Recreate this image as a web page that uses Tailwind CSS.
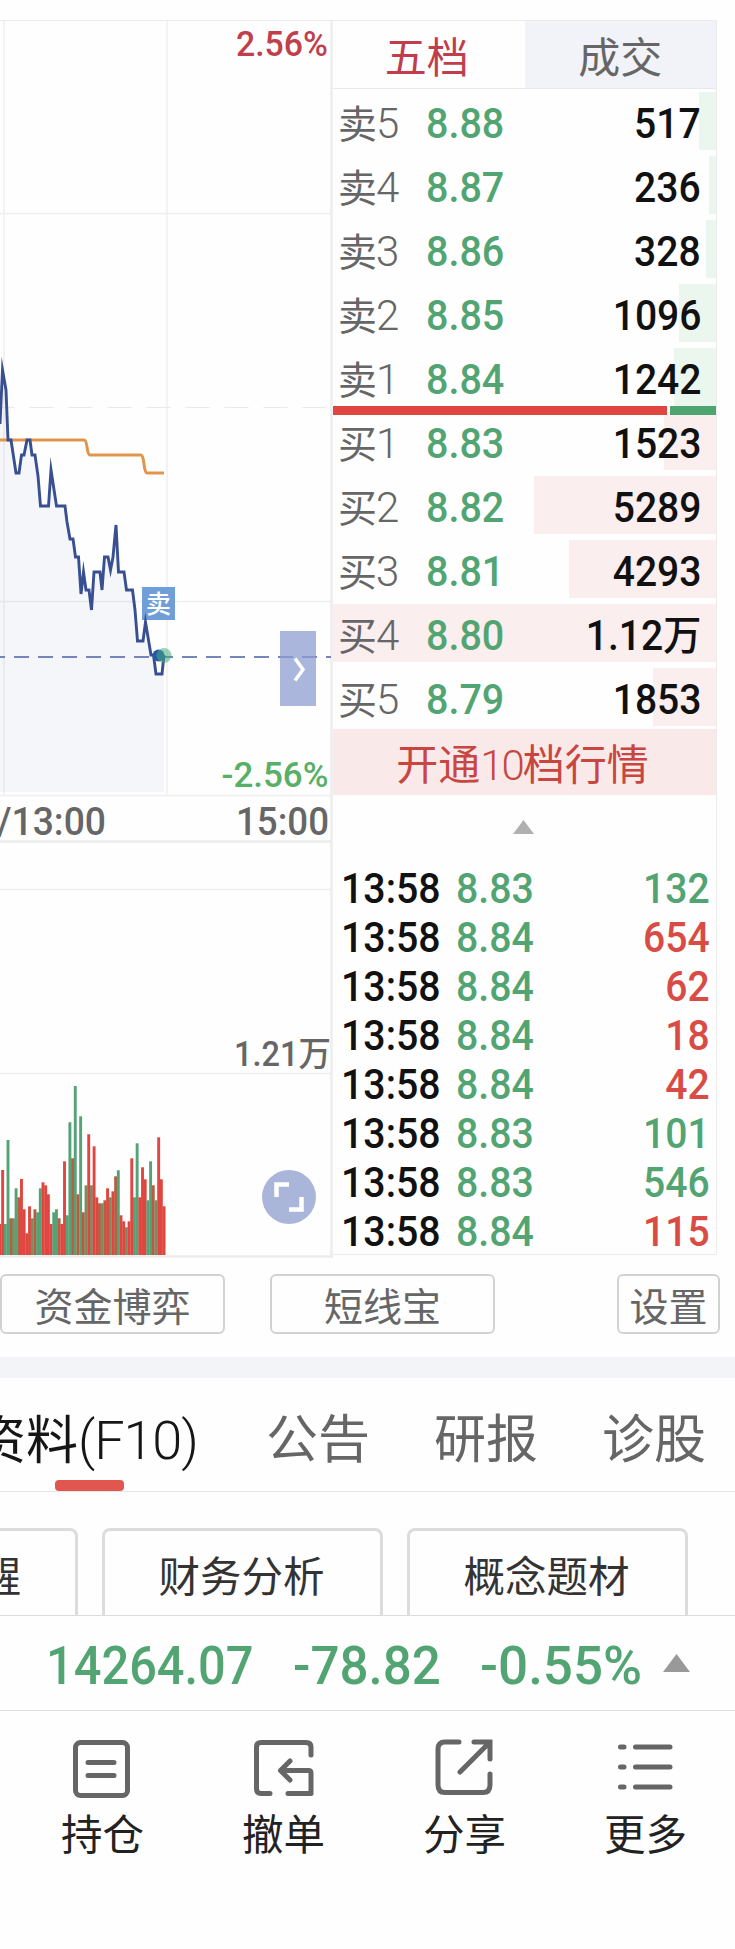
<!DOCTYPE html>
<html lang="zh-CN">
<head>
<meta charset="utf-8">
<title>行情</title>
<script src="https://cdn.jsdelivr.net/npm/@tailwindcss/browser@4"></script>
</head>
<body class="w-[735px] h-[1949px] overflow-hidden bg-[#fefefe] font-[family-name:Roboto,'Noto_Sans_CJK_SC',sans-serif] text-[#666]">

<main class="flex h-[1258px] pt-5">
  <!-- intraday chart -->
  <svg class="block w-[333px] h-[1238px] shrink-0" viewBox="0 20 333 1238" fill="none">
    <path d="M0 20.5H333" stroke="#ececec"/>
    <path d="M0 213.5H331M0 601.5H331M0 795.5H331M0 889.5H331M0 1073.5H331M4 21V795M167 21V795" stroke="#efefef" stroke-width="1.5"/>
    <path d="M-9.5 407.5H331" stroke="#e9e9e9" stroke-dasharray="24 15"/>
    <path d="M0 841.5H331M0 1256.5H333M331.5 20V1258" stroke="#ededed" stroke-width="2.5"/>
    <path d="M0 424L2.5 370L6 390L8 440H11L16 473H19L21.500 455H24L27 440H30L32 455H35L38 476L40.500 506H48.500L51 470L56.500 506H65L67 522L70 539H73L75.500 557H78.500L81 594L83.500 572L86 590H89L91.500 610L94 572H100L102 590L104.500 557H108L110.500 570L113 557L116 525L118.500 572H124L126.500 590H132.500L135 610L137.500 641H143L145.500 622L151 655H153.500L156 674H162L164 655V792H0Z" fill="#4b66b8" fill-opacity=".05"/>
    <path d="M0 440H84Q86 440 87 447Q88 455 90 455H141Q143 455 144 464Q145 473 147 473H164" stroke="#e0954b" stroke-width="3"/>
    <path d="M-10 657H331" stroke="#7484bd" stroke-width="2.200" stroke-dasharray="15 9"/>
    <rect x="142" y="587" width="33" height="33" fill="#6f9ed8"/>
    <text x="158.500" y="612.500" text-anchor="middle" font-size="25" font-weight="500" fill="#fff">卖</text>
    <path d="M0 424L2.500 370L6 390L8 440H11L16 473H19L21.500 455H24L27 440H30L32 455H35L38 476L40.500 506H48.500L51 470L56.500 506H65L67 522L70 539H73L75.500 557H78.500L81 594L83.500 572L86 590H89L91.500 610L94 572H100L102 590L104.500 557H108L110.500 570L113 557L116 525L118.500 572H124L126.500 590H132.500L135 610L137.500 641H143L145.500 622L151 655H153.500L156 674H162L164 655" stroke="#385091" stroke-width="2.900" stroke-miterlimit="10"/>
    <circle cx="158.500" cy="655.500" r="6" fill="#2458a8"/>
    <circle cx="164" cy="655.500" r="7.500" fill="#46ad7b" fill-opacity=".55"/>
    <rect x="280" y="631" width="36" height="75" fill="#8f9dd0" fill-opacity=".75"/>
    <path d="M295 658.500L303 669.500L295 680.500" stroke="#fff" stroke-width="3.500"/>
    <g font-weight="500">
      <text x="236" y="56" font-size="34.500" fill="#bf3f4b" textLength="92" lengthAdjust="spacingAndGlyphs">2.56%</text>
      <text x="221.500" y="787" font-size="34.500" fill="#57b066" textLength="107" lengthAdjust="spacingAndGlyphs">-2.56%</text>
      <text x="-3" y="834.500" font-size="39" fill="#666" textLength="109" lengthAdjust="spacingAndGlyphs">/13:00</text>
      <text x="236" y="834.500" font-size="39" fill="#666" textLength="93" lengthAdjust="spacingAndGlyphs">15:00</text>
      <text x="234" y="1065.500" font-size="34.500" fill="#666" textLength="97" lengthAdjust="spacingAndGlyphs">1.21万</text>
    </g>
    <g id="volume"></g>
    <circle cx="289" cy="1197" r="27" fill="#aab5da"/>
    <path d="M276.500 1197V1184.500H289M301.500 1197V1209.500H289" stroke="#fff" stroke-width="4.500"/>
  </svg>

  <!-- order book -->
  <section class="h-[1235px] w-[384px] overflow-hidden border-t border-r border-b border-[#ececec]">
    <div class="flex h-[68px] border-b border-[#e9e9e9] text-[42px] leading-[75px]">
      <div class="w-1/2 text-center text-[#c13d4b] pr-1">五档</div>
      <div class="w-1/2 bg-[#f2f3f8] text-center">成交</div>
    </div>
    <div class="relative h-[640px]">
      <div id="book"></div>
      <div class="absolute top-[317px] left-0 flex h-[9px] w-[384px] gap-[3px]"><i class="w-[334px] bg-[#e0463f]"></i><i class="flex-1 bg-[#4fa56f]"></i></div>
    </div>
    <div class="h-[66px] bg-[#f9e9e9] text-center text-[42px] leading-[74px] text-[#c8463f] pr-1">开通<span class="font-light tracking-[-2px]">10</span>档行情</div>
    <svg class="mt-[25px] ml-[180px] block h-[14px] w-[21px]" viewBox="0 0 21 14"><path d="M10.500 0L21 14H0Z" fill="#b0b0b0"/></svg>
    <div id="ticks" class="mt-[29px]"></div>
  </section>
</main>

<div class="flex h-[99px] pt-4">
  <div class="h-[60px] w-[225px] rounded-md border-2 border-[#d2d2d2] text-center text-[39px] leading-[64px]">资金博弈</div>
  <div class="ml-[45px] h-[60px] w-[225px] rounded-md border-2 border-[#d2d2d2] text-center text-[39px] leading-[64px]">短线宝</div>
  <div class="ml-[122px] flex h-[60px] w-[103px] justify-center rounded-md border-2 border-[#d2d2d2] text-[39px] leading-[64px] whitespace-nowrap">设置</div>
</div>
<div class="h-[21px] bg-[#f3f4f8]"></div>

<nav class="relative flex h-[114px] border-b border-[#e6e6e6] text-[52px] leading-[126px] whitespace-nowrap">
  <div class="-ml-[26px] w-[292px] text-[#161616]">资料<span class="text-[54px] tracking-[-1.1px] font-light">(F10)</span></div>
  <div class="w-[168px]">公告</div>
  <div class="w-[168px]">研报</div>
  <div>诊股</div>
  <i class="absolute left-[55px] bottom-0 h-[11px] w-[69px] rounded-[4px] bg-[#e25650]"></i>
</nav>

<div class="flex h-[124px] gap-6 overflow-hidden border-b border-[#dcdcdc] pt-9 text-[41.5px] leading-[94px] text-[#333]">
  <div class="-ml-[203px] h-[110px] w-[281px] shrink-0 rounded-lg border-3 border-[#dcdcdc] pr-[54px] text-right">提醒</div>
  <div class="h-[110px] w-[281px] shrink-0 rounded-lg border-3 border-[#dcdcdc] pr-0.5 text-center">财务分析</div>
  <div class="h-[110px] w-[281px] shrink-0 rounded-lg border-3 border-[#dcdcdc] pr-0.5 text-center">概念题材</div>
</div>

<div class="flex h-[95px] items-center border-b border-[#e0e0e0] pl-[46px] text-[53px] font-medium text-[#52a572]">
  <span class="w-[247px] pt-2"><span class="inline-block origin-left scale-x-[.92]">14264.07</span></span>
  <span class="w-[187px] pt-2"><span class="inline-block origin-left scale-x-[.965]">-78.82</span></span>
  <span class="w-[183px] pt-2"><span class="inline-block origin-left">-0.55%</span></span>
  <svg class="h-[18px] w-[27px]" viewBox="0 0 27 18"><path d="M13.500 0L27 18H0Z" fill="#999"/></svg>
</div>

<footer class="grid grid-cols-[repeat(4,181px)] pl-[12px] pt-[28px] text-[41.5px] leading-[60px] text-[#222]">
  <div class="flex flex-col items-center gap-[7px]">
    <svg class="h-[60px] w-[60px]" viewBox="0 0 60 60" fill="none" stroke="#666" stroke-width="5" stroke-linecap="round"><rect x="2.500" y="3.500" width="52" height="53" rx="5"/><path d="M15 23.500H41M15 36.500H41"/></svg>
    <span>持仓</span>
  </div>
  <div class="flex flex-col items-center gap-[7px]">
    <svg class="h-[60px] w-[60px]" viewBox="0 0 60 60" fill="none" stroke="#666" stroke-width="5" stroke-linecap="round" stroke-linejoin="round"><path d="M57 16V8Q57 3.500 52 3.500H7Q2.500 3.500 2.500 8V50Q2.500 54.500 7 54.500H16M34 54.500H57V34Q57 31.500 54.500 31.500H27M36 22L26.500 31.500L36 41"/></svg>
    <span>撤单</span>
  </div>
  <div class="flex flex-col items-center gap-[7px]">
    <svg class="h-[60px] w-[60px]" viewBox="0 0 60 60" fill="none" stroke="#666" stroke-width="5" stroke-linecap="round"><path d="M24 3H10Q3 3 3 10V46Q3 53.500 10 53.500H48Q55 53.500 55 46V35M39 3H55V20M54 4L25 33"/></svg>
    <span>分享</span>
  </div>
  <div class="flex flex-col items-center gap-[7px]">
    <svg class="h-[60px] w-[60px]" viewBox="0 0 60 60" fill="none" stroke="#666" stroke-width="5" stroke-linecap="round"><path d="M4.500 8H8M19.500 8H54M4.500 28H8M19.500 28H54M4.500 48H8M19.500 48H54"/></svg>
    <span>更多</span>
  </div>
</footer>

<script>
// label, price, volume, depth bar width
const book = [
  ['卖', 5, '8.88', '517', 17], ['卖', 4, '8.87', '236', 7], ['卖', 3, '8.86', '328', 10],
  ['卖', 2, '8.85', '1096', 37], ['卖', 1, '8.84', '1242', 42],
  ['买', 1, '8.83', '1523', 52], ['买', 2, '8.82', '5289', 182], ['买', 3, '8.81', '4293', 147],
  ['买', 4, '8.80', '1.12万', 384], ['买', 5, '8.79', '1853', 63]
];
document.getElementById('book').innerHTML = book.map(([side, n, price, vol, w]) => `
  <div class="relative flex h-16 pl-[5px] pr-[15px] text-[42px] leading-[69px] font-medium whitespace-nowrap">
    <i class="absolute right-0 top-[3px] h-[58px] ${side === '卖' ? 'bg-[#ebf6ef]' : 'bg-[#fbeeee]'}" style="width:${w}px"></i>
    <span class="relative w-[88px] font-normal"><span class="text-[39px]">${side}</span><span class="font-light -ml-px">${n}</span></span>
    <span class="relative flex-1 text-[#52a572]"><span class="inline-block origin-left scale-x-[.94]">${price}</span></span>
    <span class="relative inline-block origin-right scale-x-[.93] text-[#111]">${vol.replace('万', '<span class="text-[41px]">万</span>')}</span>
  </div>`).join('');

const ticks = [['8.83', '132', 0], ['8.84', '654', 1], ['8.84', '62', 1], ['8.84', '18', 1],
  ['8.84', '42', 1], ['8.83', '101', 0], ['8.83', '546', 0], ['8.84', '115', 1]];
document.getElementById('ticks').innerHTML = ticks.map(([price, vol, up]) => `
  <div class="flex h-[49px] pl-2 pr-[6px] text-[42px] leading-[52px] font-medium">
    <span class="w-[115px] text-[#111]"><span class="inline-block origin-left scale-x-[.935]">13:58</span></span>
    <span class="flex-1 text-[#52a572]"><span class="inline-block origin-left scale-x-[.935]">${price}</span></span>
    <span class="inline-block origin-right scale-x-[.93] ${up ? 'text-[#d94c45]' : 'text-[#52a572]'}">${vol}</span>
  </div>`).join('');

// one entry per minute: colour code and bar height in thirds of a pixel
const vol = 'r93 r255 g93 g345 o110 b110 g200 o173 r228 r137 r65 r146 b110 o137 g128 g200 r218 r209 r182 r93 g128 g137 o110 r93 r281 g119 g398 o290 g507 o182 g416 o128 b209 r362 b209 r326 r173 o155 b155 o164 r200 b173 r191 o236 g254 r119 r101 b83 r101 r290 g173 g335 r173 r263 r227 g164 g281 o209 b164 r353 r227 r146';
const colors = { r: '#e0463f', g: '#54a276', o: '#b85d42', b: '#7e8b62' };
document.getElementById('volume').innerHTML = vol.split(' ').map((v, i) => {
  const h = v.slice(1) / 3;
  return `<rect x="${(i * 2.69 - 1.5).toFixed(2)}" y="${(1255 - h).toFixed(1)}" width="2.9" height="${h.toFixed(1)}" fill="${colors[v[0]]}"/>`;
}).join('');
</script>
</body>
</html>
